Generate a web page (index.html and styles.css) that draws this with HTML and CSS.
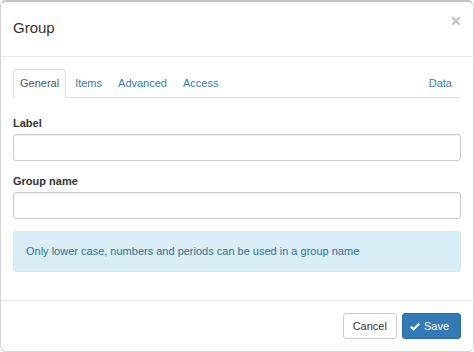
FILE: index.html
```html
<!DOCTYPE html>
<html>
<head>
<meta charset="utf-8">
<link rel="stylesheet" href="styles.css">
</head>
<body>
<div class="modal">
  <div class="modal-header">
    <h4 class="modal-title">Group</h4>
    <button class="close" type="button" aria-label="Close">
      <svg width="10" height="10" viewBox="0 0 10 10"><path d="M1.2 1.2 L8.8 8.8 M8.8 1.2 L1.2 8.8" stroke="#c4c4c4" stroke-width="2.2" stroke-linecap="butt"/></svg>
    </button>
  </div>
  <div class="modal-body">
    <ul class="nav-tabs">
      <li class="active"><a>General</a></li>
      <li><a>Items</a></li>
      <li><a>Advanced</a></li>
      <li><a>Access</a></li>
      <li class="right"><a>Data</a></li>
    </ul>
    <div class="form-group first">
      <label class="label">Label</label>
      <input class="input" type="text">
    </div>
    <div class="form-group">
      <label class="label">Group name</label>
      <input class="input" type="text">
    </div>
    <div class="alert">Only lower case, numbers and periods can be used in a group name</div>
  </div>
  <div class="modal-footer">
    <button class="btn btn-default" type="button">Cancel</button>
    <button class="btn btn-primary" type="button">
      <svg class="check" width="10" height="9" viewBox="0 0 10 9"><path d="M0.8 4.6 L3.6 7.3 L9.2 1.4" fill="none" stroke="#fff" stroke-width="2.2"/></svg>
      Save
    </button>
  </div>
</div>
</body>
</html>
```

FILE: styles.css
```css
* { box-sizing: border-box; }
html, body {
  margin: 0;
  padding: 0;
  background: #fff;
}
body {
  font-family: "Liberation Sans", Arial, sans-serif;
  font-size: 11px;
  color: #333;
}
.modal {
  width: 474px;
  height: 352px;
  border: 1px solid #d4d4d4;
  border-top: 2px solid #c2c2c2;
  border-radius: 6px;
  display: flex;
  flex-direction: column;
  background: #fff;
  overflow: hidden;
}
.modal-header {
  display: flex;
  justify-content: space-between;
  align-items: flex-start;
  padding: 16px 12px 18px 12px;
  border-bottom: 1px solid #e5e5e5;
}
.modal-title {
  margin: 0;
  font-size: 15px;
  line-height: 20px;
  font-weight: normal;
  color: #333;
}
.close {
  border: 0;
  background: none;
  padding: 0;
  margin: -2px 0 0 0;
  width: 10px;
  height: 10px;
  display: block;
}
.close svg { display: block; }
.modal-body {
  flex: 1;
  padding: 12px 12px 0 12px;
}
.nav-tabs {
  list-style: none;
  margin: 0;
  padding: 0;
  display: flex;
  border-bottom: 1px solid #ddd;
}
.nav-tabs li {
  margin: 0 2px -1px 0;
}
.nav-tabs li.right { margin-left: auto; }
.nav-tabs a {
  display: block;
  padding: 6px 6px;
  line-height: 15px;
  border: 1px solid transparent;
  border-radius: 4px 4px 0 0;
  color: #3a78b4;
}
.nav-tabs li.active a {
  color: #555;
  background: #fff;
  border-color: #ddd #ddd transparent #ddd;
}
.form-group { margin-top: 12px; }
.form-group.first { margin-top: 17px; }
.label {
  display: block;
  font-weight: bold;
  line-height: 16px;
  margin-bottom: 3px;
  color: #333;
}
.input {
  display: block;
  width: 100%;
  height: 27px;
  border: 1px solid #ccc;
  border-radius: 3px;
  box-shadow: inset 0 1px 1px rgba(0,0,0,.075);
  padding: 4px 8px;
  font-family: inherit;
  font-size: 11px;
  background: #fff;
}
.alert {
  margin-top: 12px;
  background: #d9edf7;
  color: #31708f;
  border: 1px solid #d2e9f4;
  border-radius: 3px;
  padding: 12px 12px;
  line-height: 15px;
}
.modal-footer {
  display: flex;
  justify-content: flex-end;
  gap: 5px;
  padding: 12px 12px 12px 12px;
  border-top: 1px solid #e5e5e5;
}
.btn {
  height: 26px;
  border: 1px solid #ccc;
  border-radius: 3px;
  font-family: inherit;
  font-size: 11px;
  line-height: 15px;
  padding: 0 9px;
  display: flex;
  align-items: center;
  gap: 4px;
  cursor: pointer;
}
.btn-default {
  background: #fff;
  color: #333;
}
.btn-primary {
  background: #337ab7;
  border-color: #2e6da4;
  color: #fff;
  padding: 0 11px 0 7px;
}
.check { display: block; }
```
